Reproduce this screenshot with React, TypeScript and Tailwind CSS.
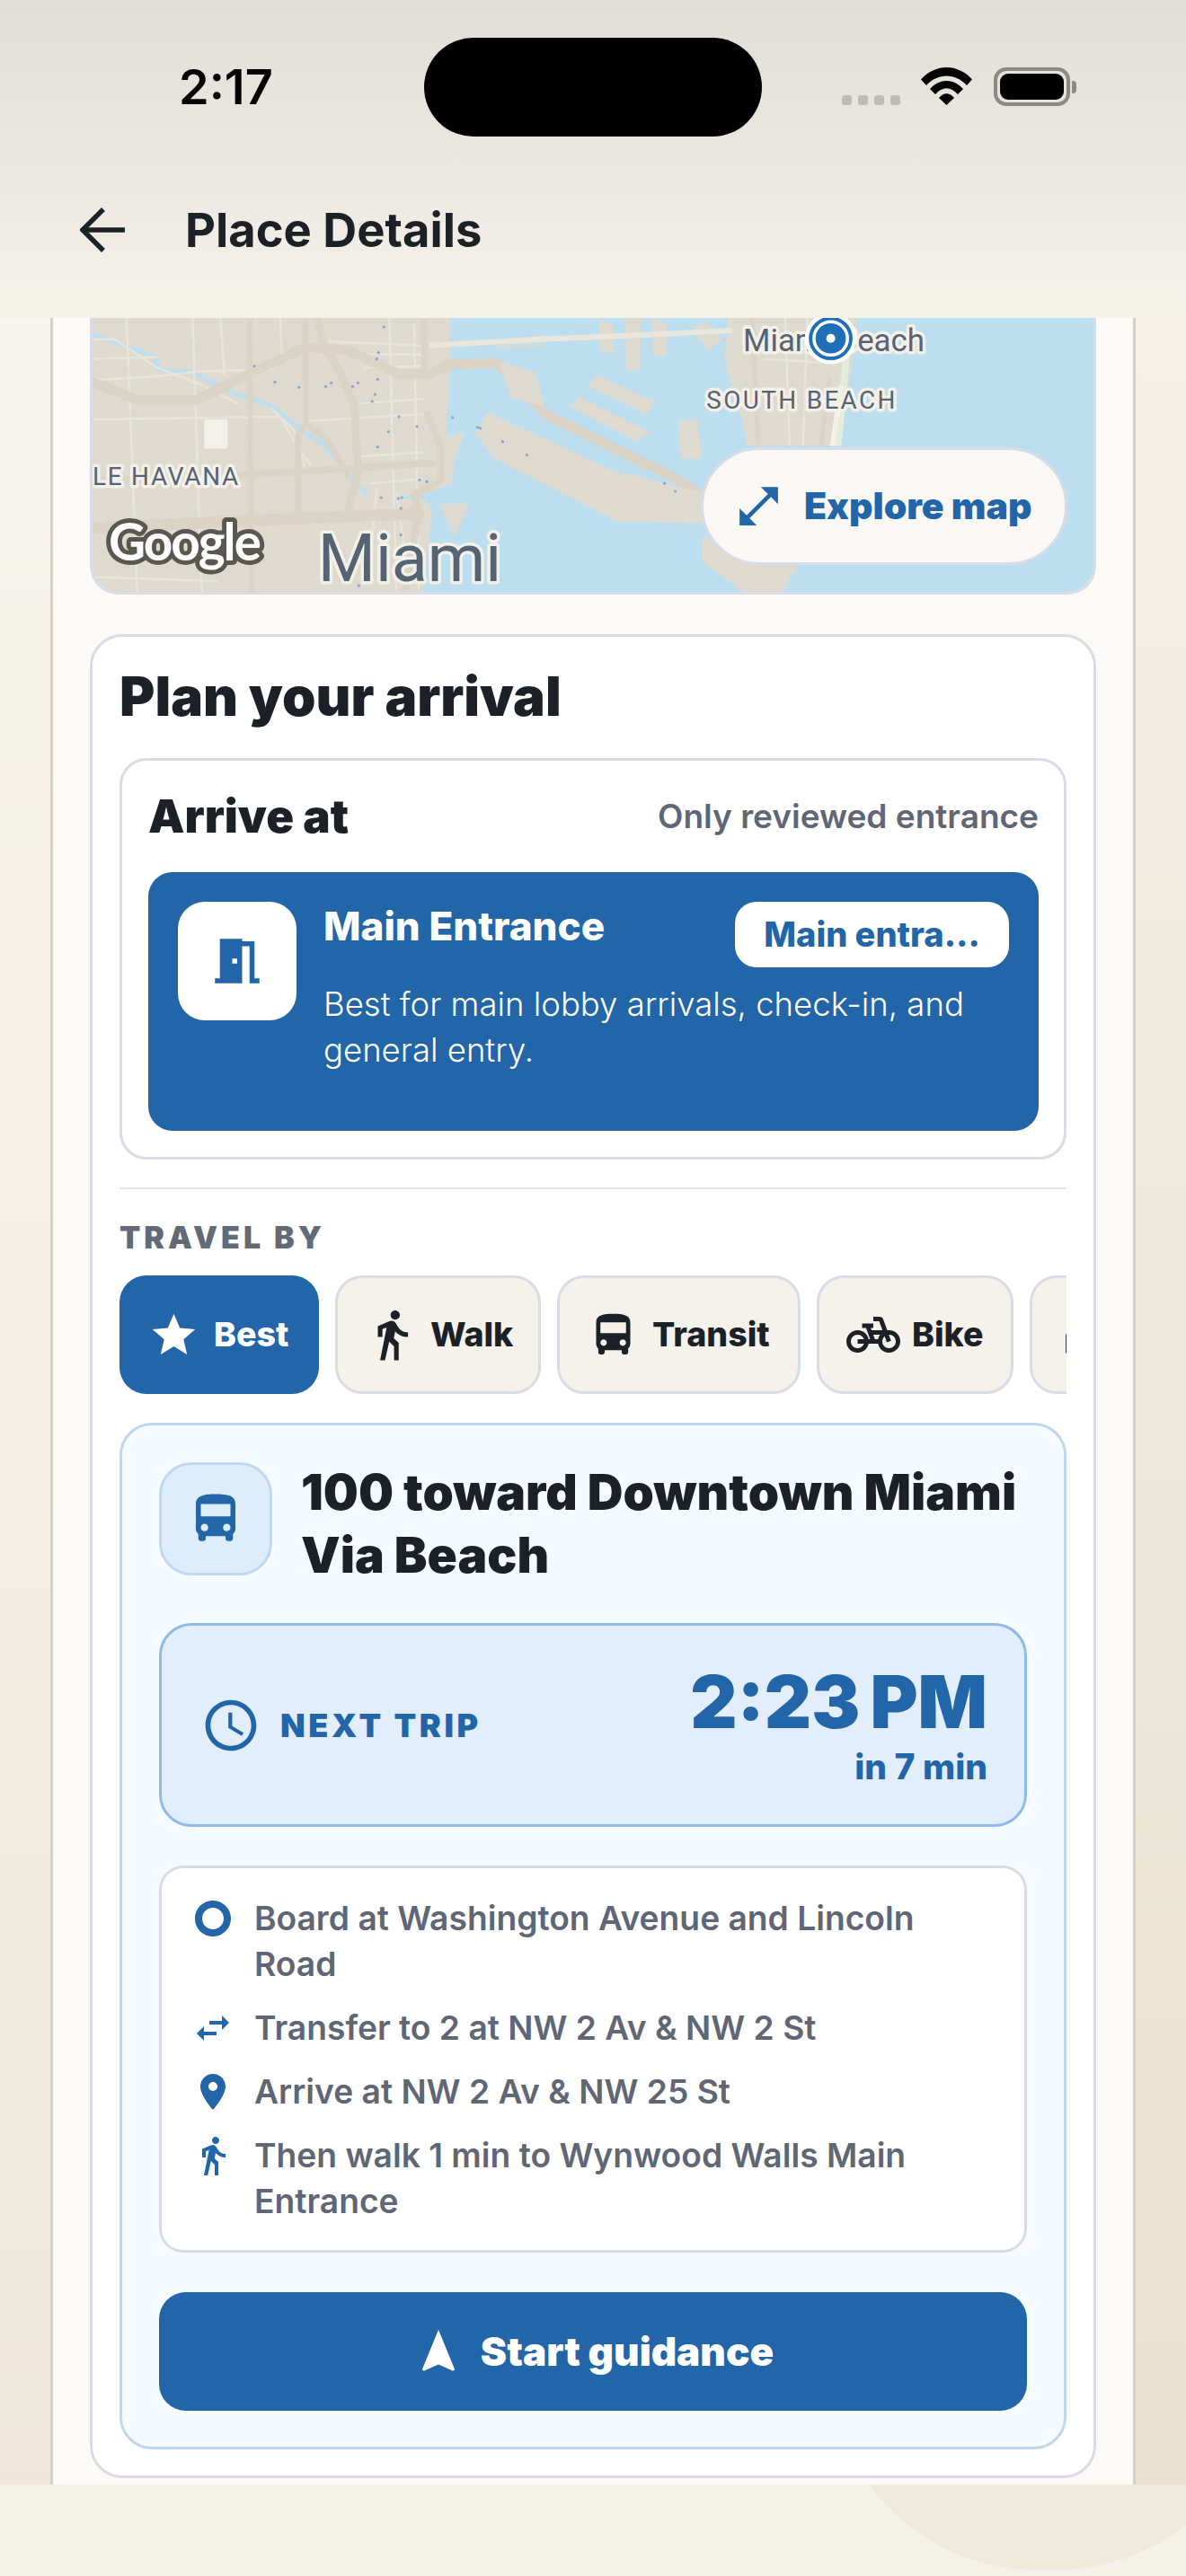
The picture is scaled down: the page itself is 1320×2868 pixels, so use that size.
import React from "react";
import {
  MdOpenInFull, MdMeetingRoom, MdStar, MdDirectionsWalk, MdDirectionsBus, MdPedalBike,
  MdDirectionsCar, MdAccessTime, MdTripOrigin, MdSwapHoriz, MdPlace, MdNavigation,
} from "react-icons/md";

const W = "#e8e4d9", H = "#dcd3c7", L = "#dedad0";

function MapArt() {
  const streets = [
    "M138 354L150 662", "M212 354L222 662", "M243 354L248 420", "M100 378L125 378L172 410L220 428L262 450",
    "M100 424L170 420L220 414L300 412", "M100 468L310 465L330 500L345 520", "M100 400L172 398",
    "M310 354L312 400L300 412", "M300 455L325 480L340 530", "M432 354L440 660", "M460 360L465 660", "M400 450L470 445",
    "M340 470L470 462", "M395 510L470 505", "M395 395L470 395", "M403 410L470 408", "M355 380L470 385",
    "M410 540L470 535", "M418 545L412 610", "M440 550L450 620", "M100 645L240 650", "M850 400L930 405", "M875 354L880 498", "M900 354L895 498",
  ];
  const dots = [[426,364],[420,393],[418,400],[281,408],[304,426],[331,432],[361,431],[367,427],[391,431],[397,427],[419,423],[416,440],[413,448],[443,465],[503,466],[531,477],[534,478],[419,499],[431,482],[463,476],[559,493],[586,508],[466,536],[446,556],[442,557],[474,538],[423,556],[445,568],[445,598],[398,655],[740,540],[752,549]];
  return (
    <svg className="block w-full h-full" viewBox="100 354 1120 308" preserveAspectRatio="none" fontFamily="Roboto, sans-serif">
      <rect x="100" y="354" width="1120" height="308" fill="#bddeee" />
      <path fill={L} d="M100 354H500L500 410L496 487L516 483L504 520L503 540L470 553L480 570L470 662H100Z" />
      <path fill="none" stroke="#bddeee" strokeWidth="5" d="M100 372L170 398L174 412L212 415L254 437L300 453L334 480L359 497L376 517L393 540L408 552" />
      <path fill="none" stroke="#bddeee" strokeWidth="4" d="M445 555L475 555" />
      {streets.map((d, i) => <path key={i} d={d} fill="none" stroke={W} strokeWidth="2.5" />)}
      <rect x="225" y="468" width="26" height="33" fill="#f3f0e9" />
      <g fill="none" stroke={H} strokeLinejoin="round" strokeLinecap="round">
        <path d="M100 426L153 447L216 447L275 417L338 387L385 390L443 417L477 417L500 406L553 405L608 463L750 533L790 560" strokeWidth="11" />
        <path d="M276 354L278 660" strokeWidth="6" />
        <path d="M338 354L339 473L330 487L330 573" strokeWidth="7" />
        <path d="M351 354L359 383L376 413L393 453L397 527L385 573" strokeWidth="9" />
        <path d="M471 354L471 413" strokeWidth="7" />
        <path d="M475 463L490 500L490 537L460 553L465 573L450 660" strokeWidth="8" />
        <path d="M100 537L280 530L481 517" strokeWidth="8" />
        <path d="M100 590L270 582L465 574" strokeWidth="13" />
        <path d="M339 473L362 490L385 530" strokeWidth="7" />
      </g>
      <g fill={L}>
        <path d="M548 383L606 372L606 388L550 390Z" opacity=".5" />
        <path d="M667 355L683 362L683 395L667 390Z" />
        <path d="M696 354L713 354L713 410L697 415Z" />
        <path d="M725 354L742 360L742 397L727 396Z" />
        <path d="M771 366L786 358L805 378L788 390Z" />
        <path d="M664 418L728 448L721 463L654 430Z" />
        <path d="M645 443L723 482L709 493L633 453Z" />
        <path d="M542 460L528 483L549 512L688 583L790 585L790 553L723 535L698 528L696 532Z" />
        <path d="M555 403L595 415L606 455L568 443Z" />
        <path d="M488 563L521 563L505 600Z" />
        <path d="M755 470L776 467L782 512L758 512Z" />
        <path d="M811 354L955 354L950 407L934 498L832 498L828 473L807 400Z" />
        <path d="M782 600L782 628L828 662L872 662L891 628Z" />
      </g>
      <path d="M477 385L600 378L721 373L816 368" fill="none" stroke="#ebe6db" strokeWidth="6" />
      {streets.slice(-3).map((d, i) => <path key={i} d={d} fill="none" stroke={W} strokeWidth="2.5" />)}
      <path d="M838 354L845 498" fill="none" stroke={H} strokeWidth="6" />
      <path d="M925 420L915 498" fill="none" stroke={H} strokeWidth="5" />
      <path d="M945 380L934 498" fill="none" stroke="#e4ecdc" strokeWidth="8" />
      <path d="M938 430L928 498" fill="none" stroke="#f3f0e9" strokeWidth="6" />
      {dots.map(([x, y], i) => <circle key={i} cx={x} cy={y} r="1.6" fill="#7ea6d8" />)}
      <g stroke="#f3f0e8" strokeWidth="7" paintOrder="stroke" strokeLinejoin="round" fill="#566375">
        <text x="828" y="391" fontSize="35">Miami Beach</text>
        <text x="787" y="456" fontSize="28" letterSpacing="2.4">SOUTH BEACH</text>
        <text x="100" y="542" fontSize="28" letterSpacing="1.8">LE HAVANA</text>
        <text x="352" y="650" fontSize="74">Miami</text>
      </g>
      <text x="118" y="627" fontSize="57" fontWeight="700" fontFamily="Lato, sans-serif" letterSpacing="-2" fill="#ffffff" stroke="#5a5750" strokeWidth="10" paintOrder="stroke" strokeLinejoin="round">Google</text>
      <circle cx="926" cy="377" r="29" fill="#fff" />
      <circle cx="926" cy="377" r="22.5" fill="none" stroke="#1f6fb8" strokeWidth="4" />
      <circle cx="926" cy="377" r="17" fill="#1f6fb8" />
      <circle cx="926" cy="377" r="5" fill="#fff" />
    </svg>
  );
}

function Chip({ icon, label, active, cls }: { icon: React.ReactNode; label: string; active?: boolean; cls: string }) {
  return (
    <div className={`shrink-0 h-[132px] rounded-[30px] flex items-center text-[37.5px] font-extrabold ${cls} ${active ? "bg-[#2265a8] text-white" : "bg-[#f5f1eb] text-[#1c2127] border-[3px] border-[#d8dce5]"}`}>
      {icon}
      <span>{label}</span>
    </div>
  );
}

function Step({ icon, text }: { icon: React.ReactNode; text: React.ReactNode }) {
  return (
    <div className="flex items-start">
      <div className="w-[48px] h-[51px] shrink-0 flex items-center justify-center text-[#2265a8]">{icon}</div>
      <div className="ml-[22px] text-[37.2px] leading-[51px] font-semibold text-[#5f6675]">{text}</div>
    </div>
  );
}

export default function App() {
  return (
    <div className="relative w-[1320px] h-[2868px] overflow-hidden flex flex-col font-['Inter',sans-serif] bg-[#f3efe5]">
      {/* header */}
      <header className="relative z-10 h-[354px] shrink-0 bg-gradient-to-b from-[#e0ded7] to-[#f5f2ea]">
        <div className="h-[194px] relative">
          <div className="absolute left-[199px] top-[66px] text-[54px] leading-[62px] font-semibold text-black">2:17</div>
          <div className="absolute left-[472px] top-[42px] w-[376px] h-[110px] rounded-[55px] bg-black" />
          <div className="absolute left-[937px] top-[106px] flex gap-[7px]">
            {[0, 1, 2, 3].map((i) => <div key={i} className="w-[11px] h-[11px] rounded-[3px] bg-[#bdbcb5]" />)}
          </div>
          <svg className="absolute left-[1025px] top-[75px]" width="57" height="42" viewBox="0 0 57 42">
            <path d="M0 13.5C16 -4.5 41 -4.5 57 13.5L51 20C38 6 19 6 6 20Z" />
            <path d="M10 24C21 12 36 12 47 24L41 30C33 21 24 21 16 30Z" />
            <path d="M20 34C25 27.5 32 27.5 37 34L28.5 42Z" />
          </svg>
          <div className="absolute left-[1106px] top-[75px] w-[85px] h-[43px] rounded-[14px] border-[4px] border-[#8b8a84] p-[3px]">
            <div className="w-full h-full bg-black rounded-[9px]" />
          </div>
          <div className="absolute left-[1193px] top-[90px] w-[5px] h-[14px] rounded-r-[4px] bg-[#8b8a84]" />
        </div>
        <div className="flex items-center pl-[89px] h-[124px]">
          <svg width="52" height="50" viewBox="0 0 52 50" fill="none" stroke="#1c2127" strokeWidth="5.5">
            <path d="M26 2L3 25L26 48" />
            <path d="M3 25H50" />
          </svg>
          <h1 className="ml-[65px] text-[52.5px] font-bold text-[#1c2127] leading-[60px]">Place Details</h1>
        </div>
      </header>

      {/* page */}
      <main className="relative flex-1 min-h-0 overflow-hidden bg-gradient-to-b from-[#f8f5ee] to-[#efe8da] px-[56px]">
        <div className="absolute right-0 top-0 w-[56px] h-[2412px] bg-gradient-to-b from-[#f4f0e6] to-[#e9e1d0]" />
        <div className="relative h-[2412px] overflow-hidden bg-[#fbfaf6] border-x-[3px] border-[#d8cfc2] px-[41px]">
          <div className="h-[308px] rounded-b-[32px] overflow-hidden relative border-x-[3px] border-b-[3px] border-[#d9dce7]">
            <MapArt />
            <div className="absolute left-[677px] top-[144px] w-[408px] h-[131px] rounded-full bg-[#faf8f4] border-[3px] border-[#d9dce7] flex items-center pl-[33px]">
              <MdOpenInFull className="text-[57px] text-[#2265a8] shrink-0" />
              <span className="ml-[22px] text-[41px] font-black text-[#2265a8] whitespace-nowrap">Explore map</span>
            </div>
          </div>

          <section className="mt-[44px] bg-white rounded-[36px] border-[3px] border-[#d9dce7] px-[30px] pt-[31px] pb-[29px]">
            <h2 className="text-[60px] leading-[70px] font-black text-[#1c2127]">Plan your arrival</h2>

            <div className="mt-[34px] rounded-[30px] border-[3px] border-[#d9dce7] pl-[29px] pr-[28px] pt-[27px] pb-[29px]">
              <div className="flex items-center justify-between h-[70px]">
                <span className="text-[51px] font-black text-[#1c2127]">Arrive at</span>
                <span className="text-[37px] font-semibold text-[#5f6675]">Only reviewed entrance</span>
              </div>
              <div className="mt-[27px] h-[288px] rounded-[27px] bg-[#2265a8] p-[33px] flex text-white">
                <div className="w-[132px] h-[132px] rounded-[30px] bg-white flex items-center justify-center shrink-0">
                  <MdMeetingRoom className="text-[66px] text-[#2265a8]" />
                </div>
                <div className="ml-[30px] flex-1">
                  <div className="flex items-start justify-between h-[73px]">
                    <span className="text-[44px] leading-[54px] font-extrabold">Main Entrance</span>
                    <span className="w-[305px] h-[73px] rounded-[24px] bg-white text-[#2265a8] text-[38px] font-extrabold flex items-center justify-center">Main entra...</span>
                  </div>
                  <p className="mt-[16px] text-[36.5px] leading-[51px] font-light">Best for main lobby arrivals, check-in, and general entry.</p>
                </div>
              </div>
            </div>

            <div className="mt-[31px] h-[2px] bg-[#e4e6ea]" />
            <div className="mt-[34px] text-[34px] leading-[40px] font-black text-[#626977] tracking-[4px]">TRAVEL BY</div>

            <div className="mt-[22px] flex gap-[18px] overflow-hidden">
              <Chip active cls="w-[222px] pl-[32px] gap-[16px]" icon={<MdStar className="text-[57px]" />} label="Best" />
              <Chip cls="w-[229px] pl-[29px] gap-[12px]" icon={<MdDirectionsWalk className="text-[62px]" />} label="Walk" />
              <Chip cls="w-[271px] pl-[31px] gap-[15px]" icon={<MdDirectionsBus className="text-[57px]" />} label="Transit" />
              <Chip cls="w-[219px] pl-[30px] gap-[13px]" icon={<MdPedalBike className="text-[60px]" />} label="Bike" />
              <Chip cls="w-[220px] pl-[30px] gap-[12px]" icon={<MdDirectionsCar className="text-[57px]" />} label="Drive" />
            </div>

            <div className="mt-[32px] rounded-[36px] border-[3px] border-[#bfd6ec] bg-[#f6fbff] px-[41px] pt-[41px] pb-[40px]">
              <div className="flex items-start">
                <div className="w-[126px] h-[126px] rounded-[36px] bg-[#deedfb] border-[3px] border-[#c0d8ef] flex items-center justify-center shrink-0">
                  <MdDirectionsBus className="text-[66px] text-[#2265a8]" />
                </div>
                <div className="ml-[32px] -mt-[2px] text-[55px] leading-[70px] font-black text-[#1c2127]">100 toward Downtown Miami Via Beach</div>
              </div>

              <div className="mt-[41px] h-[227px] rounded-[36px] bg-[#e2eefb] border-[3px] border-[#8fbbe8] pl-[43px] pr-[41px] flex items-center justify-between text-[#2265a8]">
                <div className="flex items-center">
                  <MdAccessTime className="text-[68px]" />
                  <span className="ml-[21px] text-[36px] font-black tracking-[3.6px]">NEXT TRIP</span>
                </div>
                <div className="text-right">
                  <div className="text-[81px] leading-[90px] font-black">2:23&#8201;PM</div>
                  <div className="mt-[3px] text-[39px] leading-[48px] font-extrabold">in 7 min</div>
                </div>
              </div>

              <div className="mt-[43px] rounded-[27px] bg-white border-[3px] border-[#d8dbe4] pl-[33px] pr-[30px] pt-[30px] pb-[29px] flex flex-col gap-[20px]">
                <Step icon={<MdTripOrigin className="text-[54px]" />} text={<>Board at Washington Avenue and Lincoln<br />Road</>} />
                <Step icon={<MdSwapHoriz className="text-[56px]" />} text="Transfer to 2 at NW 2 Av & NW 2 St" />
                <Step icon={<MdPlace className="text-[56px]" />} text="Arrive at NW 2 Av & NW 25 St" />
                <Step icon={<MdDirectionsWalk className="text-[58px]" />} text={<>Then walk 1 min to Wynwood Walls Main<br />Entrance</>} />
              </div>

              <div className="mt-[44px] h-[132px] rounded-[30px] bg-[#2265a8] flex items-center justify-center text-white">
                <MdNavigation className="text-[58px]" />
                <span className="ml-[18px] text-[44px] font-black">Start guidance</span>
              </div>
            </div>
          </section>
        </div>
      </main>

      {/* bottom */}
      <footer className="relative z-10 h-[102px] shrink-0 bg-[#f4f1e9] overflow-hidden">
        <div className="absolute left-[925px] -top-[360px] w-[480px] h-[455px] rounded-full bg-[#f0eadc]" />
      </footer>
    </div>
  );
}
